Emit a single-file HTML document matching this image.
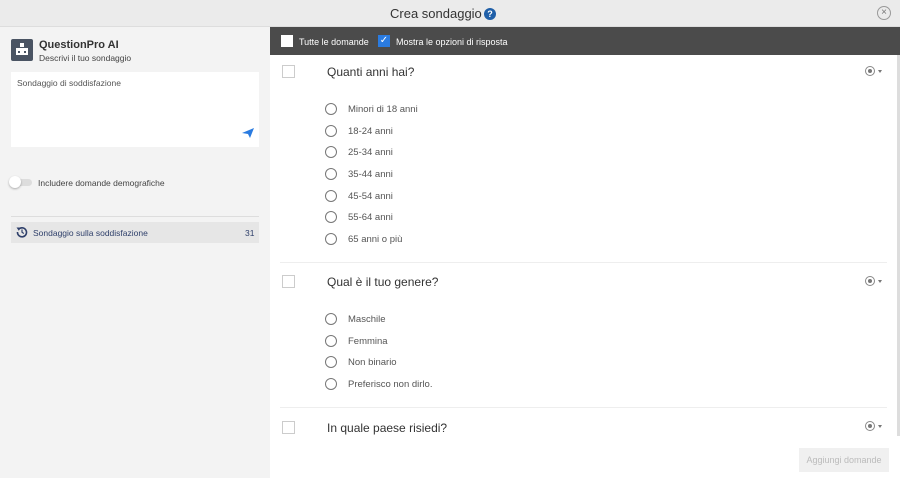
<!DOCTYPE html>
<html><head><meta charset="utf-8"><style>
*{margin:0;padding:0;box-sizing:border-box}
body{width:900px;height:478px;overflow:hidden;font-family:"Liberation Sans",sans-serif;background:#f3f3f3;position:relative;color:#333}
.hdr{position:absolute;left:0;top:0;width:900px;height:27px;background:#ebebeb;border-bottom:1px solid #ddd}
.hdr .t{position:absolute;left:390px;top:6px;font-size:13px;color:#333}
.q{position:absolute;left:484px;top:8px;width:12px;height:12px;border-radius:50%;background:#1f5fa8;color:#fff;font-size:9px;font-weight:bold;text-align:center;line-height:12px}
.x{position:absolute;left:877px;top:6px;width:14px;height:14px;border:1px solid #999;border-radius:50%;color:#777;font-size:10px;text-align:center;line-height:12px}
.left{position:absolute;left:0;top:27px;width:270px;height:451px;background:#f3f3f3}
.tb{position:absolute;left:270px;top:27px;width:630px;height:28px;background:#4b4b4b;color:#fff;font-size:9px}
.cb{position:absolute;width:12px;height:12px;background:#fff}
.main{position:absolute;left:270px;top:55px;width:627px;height:381px;background:#fff;overflow:hidden}
.sb{position:absolute;left:897px;top:55px;width:3px;height:381px;background:#ddd}
.foot{position:absolute;left:270px;top:436px;width:630px;height:42px;background:#fff}
.qb{position:absolute;left:12px;width:13px;height:13px;border:1px solid #ccc;background:#fff}
.qt{position:absolute;left:57px;font-size:12px;color:#333}
.opt{position:absolute;left:55px;font-size:9.5px;color:#555}
.opt i{position:absolute;left:0;top:-1px;width:12px;height:12px;border:1px solid #777;border-radius:50%}
.opt span{position:absolute;left:23px;top:0;white-space:nowrap}
.div{position:absolute;left:10px;width:607px;height:1px;background:#eee}
.ri{position:absolute;left:595px;width:10px;height:10px;border:1px solid #888;border-radius:50%}
.ri:after{content:"";position:absolute;left:2px;top:2px;width:4px;height:4px;border-radius:50%;background:#777}
.ar{position:absolute;left:608px;width:0;height:0;border-left:2.5px solid transparent;border-right:2.5px solid transparent;border-top:3px solid #777}
</style></head><body>
<div class="hdr"><div class="t">Crea sondaggio</div><div class="q">?</div><div class="x">×</div></div>
<div class="left">
 <div style="position:absolute;left:11px;top:12px;width:22px;height:22px;background:#4a5463;border-radius:2px">
  <div style="position:absolute;left:9px;top:4px;width:4px;height:4px;background:#fff"></div>
  <div style="position:absolute;left:5px;top:9px;width:12px;height:7px;background:#fff"></div>
  <div style="position:absolute;left:7px;top:12px;width:2px;height:2px;background:#4a5463"></div>
  <div style="position:absolute;left:13px;top:12px;width:2px;height:2px;background:#4a5463"></div>
 </div>
 <div style="position:absolute;left:39px;top:12px;font-size:11px;font-weight:bold;color:#333">QuestionPro AI</div>
 <div style="position:absolute;left:39px;top:26px;font-size:8.5px;color:#444">Descrivi il tuo sondaggio</div>
 <div style="position:absolute;left:11px;top:45px;width:248px;height:75px;background:#fff">
  <div style="position:absolute;left:6px;top:6px;font-size:8.5px;color:#555">Sondaggio di soddisfazione</div>
  <svg style="position:absolute;left:231px;top:56px" width="12" height="10" viewBox="0 0 12 10"><path d="M0 5 L12 0 L8 10 L6 6 Z" fill="#2a7be0"/></svg>
 </div>
 <div style="position:absolute;left:10px;top:152px;width:22px;height:7px;border-radius:4px;background:#ddd"></div>
 <div style="position:absolute;left:9px;top:149px;width:12px;height:12px;border-radius:50%;background:#fff;box-shadow:0 1px 2px rgba(0,0,0,.3)"></div>
 <div style="position:absolute;left:38px;top:151px;font-size:8.5px;color:#444">Includere domande demografiche</div>
 <div style="position:absolute;left:11px;top:189px;width:248px;height:1px;background:#ddd"></div>
 <div style="position:absolute;left:11px;top:195px;width:248px;height:21px;background:#e6e6e6">
  <svg style="position:absolute;left:5px;top:4px" width="12" height="12" viewBox="0 0 12 12"><path d="M2.5 3.5 A4.5 4.5 0 1 1 1.5 6" fill="none" stroke="#2e3f6a" stroke-width="1.6"/><path d="M0.5 1.5 L3.5 1.5 L3 5 Z" fill="#2e3f6a"/><path d="M6 3.5 V6.2 L7.8 7.5" fill="none" stroke="#2e3f6a" stroke-width="1.2"/></svg>
  <div style="position:absolute;left:22px;top:6px;font-size:8.5px;color:#2e3f6a">Sondaggio sulla soddisfazione</div>
  <div style="position:absolute;left:234px;top:6px;font-size:8.5px;color:#2e3f6a">31</div>
 </div>
</div>
<div class="tb">
 <div class="cb" style="left:11px;top:8px"></div><div style="position:absolute;left:29px;top:10px">Tutte le domande</div>
 <div class="cb" style="left:108px;top:8px;background:#2a7be0;color:#fff;font-size:10px;line-height:12px;text-align:center">✓</div><div style="position:absolute;left:126px;top:10px">Mostra le opzioni di risposta</div>
</div>
<div class="main">
 <div class="qb" style="top:10px"></div><div class="qt" style="top:10px">Quanti anni hai?</div><div class="ri" style="top:11px"></div><div class="ar" style="top:15px"></div>
 <div class="opt" style="top:49px"><i></i><span>Minori di 18 anni</span></div>
 <div class="opt" style="top:71px"><i></i><span>18-24 anni</span></div>
 <div class="opt" style="top:92px"><i></i><span>25-34 anni</span></div>
 <div class="opt" style="top:114px"><i></i><span>35-44 anni</span></div>
 <div class="opt" style="top:136px"><i></i><span>45-54 anni</span></div>
 <div class="opt" style="top:157px"><i></i><span>55-64 anni</span></div>
 <div class="opt" style="top:179px"><i></i><span>65 anni o più</span></div>
 <div class="div" style="top:207px"></div>
 <div class="qb" style="top:220px"></div><div class="qt" style="top:220px">Qual è il tuo genere?</div><div class="ri" style="top:221px"></div><div class="ar" style="top:225px"></div>
 <div class="opt" style="top:259px"><i></i><span>Maschile</span></div>
 <div class="opt" style="top:281px"><i></i><span>Femmina</span></div>
 <div class="opt" style="top:302px"><i></i><span>Non binario</span></div>
 <div class="opt" style="top:324px"><i></i><span>Preferisco non dirlo.</span></div>
 <div class="div" style="top:352px"></div>
 <div class="qb" style="top:366px"></div><div class="qt" style="top:366px">In quale paese risiedi?</div><div class="ri" style="top:366px"></div><div class="ar" style="top:370px"></div>
</div>
<div class="sb"></div>
<div class="foot"><div style="position:absolute;left:529px;top:12px;width:90px;height:24px;background:#f0f0f0;color:#bbb;font-size:9px;text-align:center;line-height:24px">Aggiungi domande</div></div>
</body></html>
